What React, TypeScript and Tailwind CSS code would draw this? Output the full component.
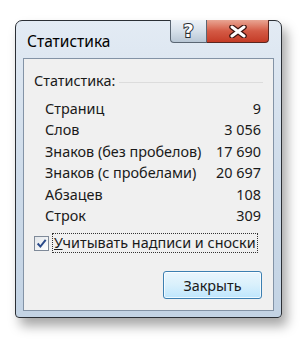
import React from 'react';

const rows: [string, string][] = [
  ['Страниц', '9'],
  ['Слов', '3 056'],
  ['Знаков (без пробелов)', '17 690'],
  ['Знаков (с пробелами)', '20 697'],
  ['Абзацев', '108'],
  ['Строк', '309'],
];

export default function App() {
  return (
    <div className="w-[300px] h-[345px] bg-white pt-[20px] pl-[15px] font-['Noto_Sans',sans-serif] text-[14.4px] text-[#1a1a1a]">
      <div className="w-[267px] h-[298px] rounded-t-[7px] rounded-b-[4px] border border-[#2b2f35] bg-gradient-to-b from-[#e3ebf4] via-[#cfdcea] to-[#c3d3e4] shadow-[5px_8px_12px_rgba(0,0,0,0.35)] flex flex-col">
        {/* Title bar */}
        <div className="h-[37px] flex items-start pl-[11px] pr-[12px]">
          <div className="pt-[10px] leading-[20px] text-[15.5px] text-black flex-1">Статистика</div>
          <div className="flex h-[23px] -mt-px">
            <div className="w-[37px] h-full rounded-bl-[4px] border border-[#5a6673] border-t-0 bg-gradient-to-b from-[#eef3f8] via-[#d6e0ea] to-[#b9c7d5] flex items-center justify-center">
              <span className="font-['DejaVu_Sans',sans-serif] font-bold text-[18px] leading-none text-white [-webkit-text-stroke:2px_#2a2f36] [paint-order:stroke_fill]">?</span>
            </div>
            <div className="w-[62px] h-full rounded-br-[4px] border border-[#5a2620] border-t-0 border-l-0 bg-gradient-to-b from-[#e8a593] via-[#d45a45] to-[#c43b26] flex items-center justify-center">
              <svg width="18" height="13" viewBox="0 0 18 13">
                <path d="M3 2 L15 11 M15 2 L3 11" stroke="#3b1410" strokeWidth="5.5" strokeLinecap="round" />
                <path d="M3 2 L15 11 M15 2 L3 11" stroke="#ffffff" strokeWidth="3" strokeLinecap="round" />
              </svg>
            </div>
          </div>
        </div>
        {/* Content panel */}
        <div className="mx-[7px] mb-[6px] flex-1 border border-[#8393a6] bg-[#f0f0f0] flex flex-col px-[10px]">
          <div className="flex items-center mt-[12px] h-[20px]">
            <span className="leading-[20px]">Статистика:</span>
            <div className="flex-1 ml-[4px] mt-[2px] border-t border-[#dcdcdc]" />
          </div>
          <div className="flex flex-col pl-[11px] pr-[2px] mt-[7px]">
            {rows.map(([label, value]) => (
              <div key={label} className="flex justify-between h-[21.4px] leading-[21px]">
                <span>{label}</span>
                <span>{value}</span>
              </div>
            ))}
          </div>
          <div className="flex items-center mt-[7px]">
            <div className="w-[15px] h-[15px] border border-[#7f8a99] bg-gradient-to-br from-[#e2e6ea] to-white flex items-center justify-center">
              <svg width="11" height="11" viewBox="0 0 10 10">
                <path d="M1.5 5 L4 7.8 L8.8 1.8" fill="none" stroke="#2a4a8a" strokeWidth="1.8" />
              </svg>
            </div>
            <div className="ml-[3px] border border-dotted border-[#333] px-[1px] leading-[18px] whitespace-nowrap">
              <span className="underline">У</span>читывать надписи и сноски
            </div>
          </div>
          <div className="flex justify-end mt-[18px] pr-[1px]">
            <div className="w-[99px] h-[28px] rounded-[3px] border border-[#3c7fb1] bg-gradient-to-b from-[#eaf6fd] via-[#d9f0fc] to-[#bee6fd] shadow-[inset_0_0_0_1px_rgba(255,255,255,0.7)] flex items-center justify-center">
              Закрыть
            </div>
          </div>
        </div>
      </div>
    </div>
  );
}
